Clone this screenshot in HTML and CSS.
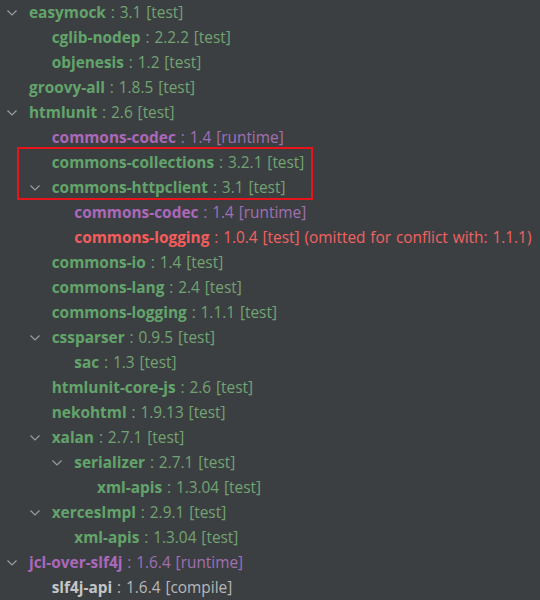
FILE: index.html
```html
<!DOCTYPE html>
<html>
<head>
<meta charset="utf-8">
<link rel="stylesheet" href="styles.css">
</head>
<body>
<div class="tree">
  <div class="row l0"><span class="tog open"><svg viewBox="0 0 10 6"><path d="M0.5 0.5 L5 5 L9.5 0.5"/></svg></span><span class="name g">easymock</span><span class="ver g"> : 3.1 [test]</span></div>
  <div class="row l1"><span class="tog"></span><span class="name g">cglib-nodep</span><span class="ver g"> : 2.2.2 [test]</span></div>
  <div class="row l1"><span class="tog"></span><span class="name g">objenesis</span><span class="ver g"> : 1.2 [test]</span></div>
  <div class="row l0"><span class="tog"></span><span class="name g">groovy-all</span><span class="ver g"> : 1.8.5 [test]</span></div>
  <div class="row l0"><span class="tog open"><svg viewBox="0 0 10 6"><path d="M0.5 0.5 L5 5 L9.5 0.5"/></svg></span><span class="name g">htmlunit</span><span class="ver g"> : 2.6 [test]</span></div>
  <div class="row l1"><span class="tog"></span><span class="name p">commons-codec</span><span class="ver p"> : 1.4 [runtime]</span></div>
  <div class="highlight">
    <div class="row l1"><span class="tog"></span><span class="name g">commons-collections</span><span class="ver g"> : 3.2.1 [test]</span></div>
    <div class="row l1"><span class="tog open"><svg viewBox="0 0 10 6"><path d="M0.5 0.5 L5 5 L9.5 0.5"/></svg></span><span class="name g">commons-httpclient</span><span class="ver g"> : 3.1 [test]</span></div>
  </div>
  <div class="row l2"><span class="tog"></span><span class="name p">commons-codec</span><span class="ver p"> : 1.4 [runtime]</span></div>
  <div class="row l2"><span class="tog"></span><span class="name r">commons-logging</span><span class="ver r"> : 1.0.4 [test] (omitted for conflict with: 1.1.1)</span></div>
  <div class="row l1"><span class="tog"></span><span class="name g">commons-io</span><span class="ver g"> : 1.4 [test]</span></div>
  <div class="row l1"><span class="tog"></span><span class="name g">commons-lang</span><span class="ver g"> : 2.4 [test]</span></div>
  <div class="row l1"><span class="tog"></span><span class="name g">commons-logging</span><span class="ver g"> : 1.1.1 [test]</span></div>
  <div class="row l1"><span class="tog open"><svg viewBox="0 0 10 6"><path d="M0.5 0.5 L5 5 L9.5 0.5"/></svg></span><span class="name g">cssparser</span><span class="ver g"> : 0.9.5 [test]</span></div>
  <div class="row l2"><span class="tog"></span><span class="name g">sac</span><span class="ver g"> : 1.3 [test]</span></div>
  <div class="row l1"><span class="tog"></span><span class="name g">htmlunit-core-js</span><span class="ver g"> : 2.6 [test]</span></div>
  <div class="row l1"><span class="tog"></span><span class="name g">nekohtml</span><span class="ver g"> : 1.9.13 [test]</span></div>
  <div class="row l1"><span class="tog open"><svg viewBox="0 0 10 6"><path d="M0.5 0.5 L5 5 L9.5 0.5"/></svg></span><span class="name g">xalan</span><span class="ver g"> : 2.7.1 [test]</span></div>
  <div class="row l2"><span class="tog open"><svg viewBox="0 0 10 6"><path d="M0.5 0.5 L5 5 L9.5 0.5"/></svg></span><span class="name g">serializer</span><span class="ver g"> : 2.7.1 [test]</span></div>
  <div class="row l3"><span class="tog"></span><span class="name g">xml-apis</span><span class="ver g"> : 1.3.04 [test]</span></div>
  <div class="row l1"><span class="tog open"><svg viewBox="0 0 10 6"><path d="M0.5 0.5 L5 5 L9.5 0.5"/></svg></span><span class="name g">xercesImpl</span><span class="ver g"> : 2.9.1 [test]</span></div>
  <div class="row l2"><span class="tog"></span><span class="name g">xml-apis</span><span class="ver g"> : 1.3.04 [test]</span></div>
  <div class="row l0"><span class="tog open"><svg viewBox="0 0 10 6"><path d="M0.5 0.5 L5 5 L9.5 0.5"/></svg></span><span class="name p">jcl-over-slf4j</span><span class="ver p"> : 1.6.4 [runtime]</span></div>
  <div class="row l1"><span class="tog"></span><span class="name w">slf4j-api</span><span class="ver w"> : 1.6.4 [compile]</span></div>
</div>
</body>
</html>
```
FILE: styles.css
```css
html, body {
  margin: 0;
  padding: 0;
  background: #3c3f41;
}
body {
  width: 540px;
  height: 600px;
  overflow: hidden;
  font-family: "Open Sans", "Noto Sans", sans-serif;
  font-size: 15.4px;
}
.tree {
  display: flex;
  flex-direction: column;
}
.row {
  display: flex;
  align-items: center;
  height: 25px;
  white-space: nowrap;
}
.l0 { padding-left: 5px; }
.l1 { padding-left: 27.7px; }
.l2 { padding-left: 50.3px; }
.l3 { padding-left: 73px; }
.tog {
  flex: 0 0 24px;
  display: flex;
  align-items: center;
  height: 25px;
}
.tog svg {
  width: 10px;
  height: 6px;
  margin-left: 2px;
  margin-top: 1px;
  fill: none;
  stroke: #9a9c9e;
  stroke-width: 1.2;
}
.name {
  font-weight: 700;
}
.ver {
  white-space: pre;
  word-spacing: 0.9px;
}
.name.g { color: #62a46b; }
.ver.g { color: #72a373; }
.name.p { color: #ab68ba; }
.ver.p { color: #a16fb4; }
.name.r { color: #f55c5c; }
.ver.r { color: #f26262; }
.name.w { color: #c3c5c7; }
.ver.w { color: #b6b8ba; }
.highlight {
  position: relative;
}
.highlight::after {
  content: "";
  position: absolute;
  left: 17px;
  top: -3px;
  width: 292px;
  height: 49px;
  border: 2.5px solid #e8141c;
  pointer-events: none;
}
```
